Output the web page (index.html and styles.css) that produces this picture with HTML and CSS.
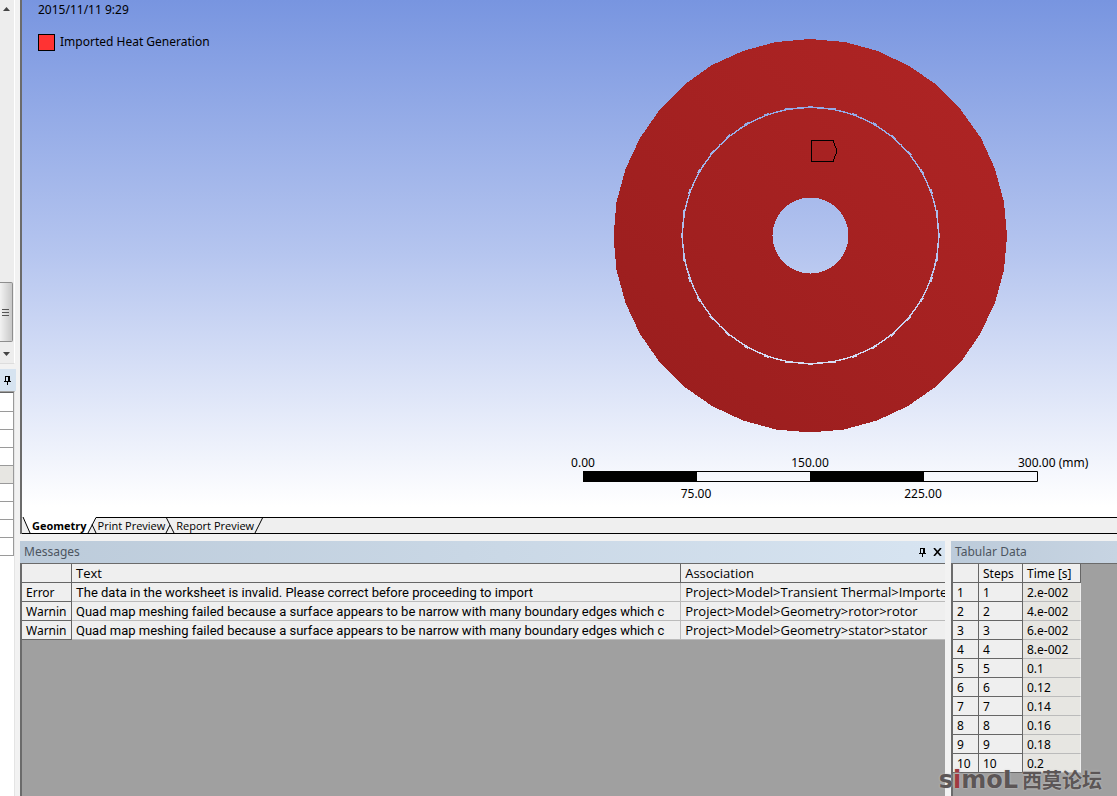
FILE: index.html
```
<!DOCTYPE html>
<html lang="en">
<head>
<meta charset="utf-8">
<title>Imported Heat Generation</title>
<link rel="stylesheet" href="styles.css">
</head>
<body>
<div class="app">
  <aside class="side">
    <div class="scroll">
      <button class="arrow" aria-label="Scroll up"><svg width="7" height="4"><path d="M0 4L3.500 0L7 4Z" fill="#444"/></svg></button>
      <div class="thumb"><i></i><i></i><i></i></div>
      <button class="arrow" aria-label="Scroll down"><svg width="7" height="4"><path d="M0 0L3.500 4L7 0Z" fill="#444"/></svg></button>
    </div>
    <div class="side-head">
      <button class="icon" aria-label="Pin details"><svg width="7" height="9" shape-rendering="crispEdges"><path d="M1 0H6V5H7V6H4V9H3V6H0V5H1ZM2 1V5H4V1Z" fill-rule="evenodd"/></svg></button>
    </div>
    <div class="details"><div></div><div></div><div></div><div></div><div class="group"></div><div></div><div></div><div></div><div></div></div>
  </aside>
  <main class="main">
    <section class="viewport">
      <div class="canvas">
        <div class="legend">
          <p>2015/11/11 9:29</p>
          <p class="key"><span class="swatch"></span>Imported Heat Generation</p>
        </div>
        <div class="model">
          <svg class="disc" width="395" height="394" viewBox="-197 -197 395 394" shape-rendering="crispEdges">
            <defs>
              <linearGradient id="steel" x1="1" y1="0" x2="0" y2="1"><stop offset=".1" stop-color="#ae2424"/><stop offset=".9" stop-color="#9b1e1e"/></linearGradient>
              <mask id="gaps" maskUnits="userSpaceOnUse" x="-200" y="-200" width="400" height="400">
                <rect x="-200" y="-200" width="400" height="400" fill="#fff"/>
                <circle cx=".5" cy="-.5" r="38"/>
                <circle cx=".5" cy="-.5" r="128" fill="none" stroke="#000" stroke-width="1.400"/>
                <circle cx=".5" cy="-.5" r="128.500" fill="none" stroke="#000" stroke-width="2" pathLength="36" stroke-dasharray=".25 .75" stroke-dashoffset=".12"/>
              </mask>
            </defs>
            <polygon mask="url(#gaps)" fill="url(#steel)" points="0,-197 35,-194 68,-185 99,-170 127,-151 151,-126 171,-98 185,-67 194,-34 197,0 194,34 185,67 170,98 151,126 126,150.500 98,170 67,184.500 34,193.500 0,196.500 -34,193.500 -67,184.500 -98,170 -126,150.500 -150.500,126 -170,98 -184.500,67 -193.500,34 -196.500,0 -193.500,-34 -184.500,-67 -170,-98 -150.500,-126 -126,-151 -98,-171 -67,-185 -34,-194"/>
            <path d="M1.500 -95.500H23L27 -85L23 -74.500H1.500Z" fill="none" stroke="#000"/>
          </svg>
          <svg class="scale" width="455" height="46">
            <g text-anchor="middle"><text x="0" y="13">0.00</text><text x="227" y="13">150.00</text><text x="113" y="44">75.00</text><text x="340" y="44">225.00</text></g>
            <text x="435" y="13">300.00 (mm)</text>
            <path d="M.5 17.500H454.500V27.500H.5Z" fill="none" stroke="#000"/>
            <path d="M0 17H114V28H0ZM227 17H341V28H227Z"/>
          </svg>
        </div>
      </div>
      <nav class="tabs">
        <svg width="10" height="16"><path d="M0 0H10V16H9Z" fill="#fff"/><path d="M1 0L8 16" stroke="#000"/></svg>
        <button class="tab on">Geometry</button>
        <svg width="11" height="16"><path d="M0 0H9L1 16H0Z" fill="#fff"/><path d="M1 16L9 .5H11M5 7.500L9 16" stroke="#000" fill="none"/></svg>
        <button class="tab">Print Preview</button>
        <svg width="11" height="16"><path d="M0 .5H11M1 0L9 16M1 16L5 8" stroke="#000" fill="none"/></svg>
        <button class="tab">Report Preview</button>
        <svg width="10" height="16"><path d="M0 .5H10M1 16L9 0" stroke="#000" fill="none"/></svg>
        <span class="rest"></span>
      </nav>
    </section>
    <div class="bottom">
      <section class="panel messages">
        <header class="head"><h2>Messages</h2>
          <button class="icon" aria-label="Pin"><svg width="7" height="9" shape-rendering="crispEdges"><path d="M1 0H6V5H7V6H4V9H3V6H0V5H1ZM2 1V5H4V1Z" fill-rule="evenodd"/></svg></button>
          <button class="icon" aria-label="Close"><svg width="9" height="8"><path d="M1 0L8 8M8 0L1 8" stroke="#000" stroke-width="1.600"/></svg></button>
        </header>
        <div class="body">
          <table class="msg">
            <colgroup><col class="c-type"><col class="c-text"><col></colgroup>
            <thead><tr><th></th><th>Text</th><th>Association</th></tr></thead>
            <tbody>
              <tr><th>Error</th><td class="text">The data in the worksheet is invalid. Please correct before proceeding to import</td><td>Project&gt;Model&gt;Transient Thermal&gt;Imported</td></tr>
              <tr><th>Warnin</th><td class="text">Quad map meshing failed because a surface appears to be narrow with many boundary edges which c</td><td>Project&gt;Model&gt;Geometry&gt;rotor&gt;rotor</td></tr>
              <tr><th>Warnin</th><td class="text">Quad map meshing failed because a surface appears to be narrow with many boundary edges which c</td><td>Project&gt;Model&gt;Geometry&gt;stator&gt;stator</td></tr>
            </tbody>
          </table>
        </div>
      </section>
      <section class="panel tabular">
        <header class="head"><h2>Tabular Data</h2></header>
        <div class="body">
          <table class="data">
            <colgroup><col class="c-num"><col class="c-step"><col class="c-time"></colgroup>
            <thead><tr><th></th><th>Steps</th><th>Time [s]</th></tr></thead>
            <tbody>
              <tr><th>1</th><th>1</th><td>2.e-002</td></tr>
              <tr><th>2</th><th>2</th><td>4.e-002</td></tr>
              <tr><th>3</th><th>3</th><td>6.e-002</td></tr>
              <tr><th>4</th><th>4</th><td>8.e-002</td></tr>
              <tr><th>5</th><th>5</th><td>0.1</td></tr>
              <tr><th>6</th><th>6</th><td>0.12</td></tr>
              <tr><th>7</th><th>7</th><td>0.14</td></tr>
              <tr><th>8</th><th>8</th><td>0.16</td></tr>
              <tr><th>9</th><th>9</th><td>0.18</td></tr>
              <tr><th>10</th><th>10</th><td>0.2</td></tr>
            </tbody>
          </table>
        </div>
      </section>
    </div>
  </main>
  <div class="mark"><span class="latin">s<b>i</b>moL</span><span class="han">西莫论坛</span></div>
</div>
</body>
</html>
```
FILE: styles.css
```
* { box-sizing: border-box; }
body { margin: 0; font: 12px/18px "Noto Sans", "Noto Sans CJK SC", sans-serif; color: #000; }
button { border: 0; padding: 0; background: none; font: inherit; color: inherit; }
p, h2 { margin: 0; }
svg { display: block; flex: none; }
.app { position: relative; display: flex; height: 100vh; overflow: hidden; background: #f2f2f2; }

.side { flex: 0 0 20px; display: flex; flex-direction: column; }
.scroll { width: 15px; height: 364px; display: flex; flex-direction: column; background: #ededed; border-right: 1px solid #fff; border-bottom: 1px solid #ddd; }
.arrow { height: 18px; width: 12px; display: flex; align-items: center; justify-content: center; }
.thumb { margin-top: auto; width: 13px; height: 60px; border: 1px solid #8e8e8e; border-left: 0; border-radius: 0 2px 2px 0; background: linear-gradient(90deg, #f2f2f2, #c8c8c8); display: flex; flex-direction: column; justify-content: center; gap: 2px; padding-left: 2px; }
.thumb i { width: 7px; height: 1px; background: #555; }
.thumb + .arrow { margin-top: 3px; }
.side-head { width: 16px; height: 22px; margin-top: 5px; background: #d6e3f0; display: flex; align-items: center; padding-left: 4px; }
.icon { display: flex; }
.details { flex: 1; width: 15px; border-right: 1px solid #e4e4e4; background: #fff; border-top: 1px solid #a0a0a0; }
.details div { width: 14px; height: 18px; border: solid #9a9a9a; border-width: 0 1px 1px 0; background: #fff; }
.details div:first-child { height: 20px; border-top: 1px solid #666; }
.details .group { background: #e7e6e2; }

.main { flex: 1; min-width: 0; display: grid; grid-template-rows: 534fr 262fr; }
.viewport { min-height: 0; display: flex; flex-direction: column; border-left: 2px solid #6b6b6b; }
.canvas { flex: 1; min-height: 0; display: flex; justify-content: space-between; background: linear-gradient(#7895e0, #b5c5ef 49%, #fff 98%); }
.legend { padding: 1px 0 0 16px; }
.key { display: flex; align-items: center; gap: 5px; margin-top: 14px; }
.swatch { width: 17px; height: 17px; background: #f33; border: 1px solid #000; }
.model { padding: 39px 79px 0 0; display: flex; flex-direction: column; align-items: center; gap: 21px; }
.scale { overflow: visible; }
.tabs { display: flex; height: 17px; background: #efefef; border-bottom: 1px solid #000; font: 11px/15px "Open Sans", sans-serif; }
.tab { border-top: 1px solid #000; white-space: nowrap; }
.tab.on { background: #fff; border-color: #fff; font-weight: 700; }
.rest { flex: 1; border-top: 1px solid #000; }

.bottom { min-height: 0; display: flex; gap: 6px; padding-top: 7px; }
.panel { display: flex; flex-direction: column; min-width: 0; }
.messages { flex: 1; }
.tabular { flex: 0 0 166px; }
.head { display: flex; align-items: center; gap: 7px; height: 22px; padding: 0 3px 0 4px; background: linear-gradient(90deg, #bccbda, #d7e4f1); color: #4c5560; }
.tabular .head { background: linear-gradient(90deg, #bccbda, #c7d4e2); }
.head h2 { flex: 1; font: 12px/18px "Noto Sans", sans-serif; }
.body { flex: 1; min-height: 0; overflow: hidden; background: #a0a0a0; border: solid #6b6b6b; border-width: 1px 0 0 2px; }
table { table-layout: fixed; border-collapse: separate; border-spacing: 0; }
.msg { width: 100%; }
.msg td:last-child, .msg thead th { font: 13px/17px "Open Sans", sans-serif; }
.msg .text { font: 13px/17px Roboto, sans-serif; }
.data { width: 128px; }
.c-type { width: 50px; }
.c-text { width: 66%; }
.c-num { width: 26px; }
.c-step { width: 44px; }
.c-time { width: 58px; }
th, td { height: 19px; padding: 0 4px; line-height: 17px; font-weight: 400; text-align: left; white-space: nowrap; overflow: hidden; background: #efefef; border: solid #666; border-width: 0 1px 1px 0; }
td { border-color: #bbb; }
.msg tr > :last-child { padding-right: 0; border-right: 0; }
.data td { background: #e7e6e2; border-right-color: #efefef; }

.mark { position: absolute; right: 15px; bottom: 6px; display: flex; align-items: center; gap: 4px; color: #5c5656; text-shadow: 0 0 2px #ccc; }
.latin { font: 700 24px/20px "DejaVu Sans", sans-serif; }
.latin b { color: #a03a40; }
.han { font: 700 20px/20px "Noto Sans CJK SC", sans-serif; }
```
